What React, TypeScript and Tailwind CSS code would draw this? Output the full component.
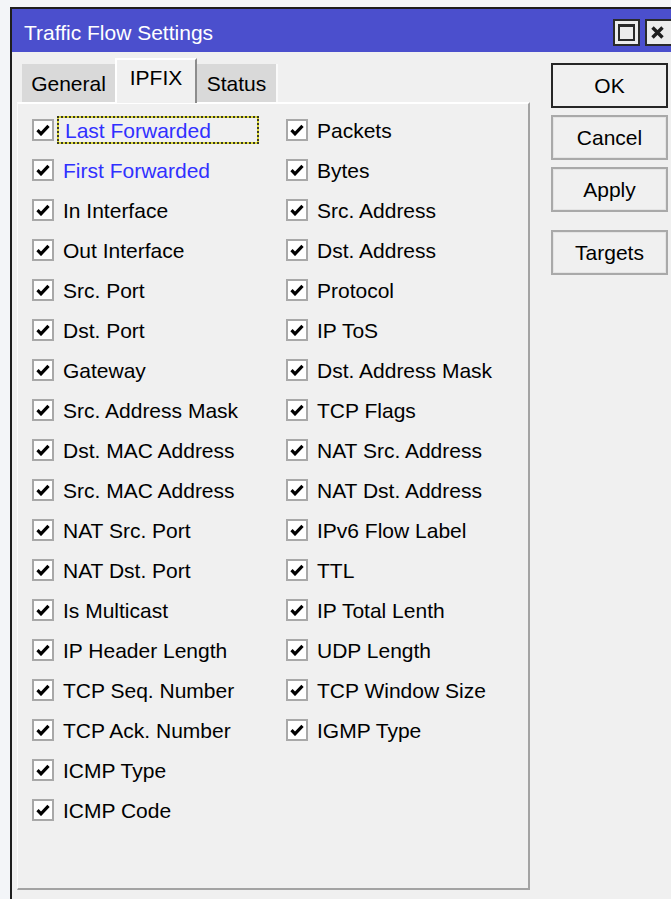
import React from "react";

const leftFields = [
  "Last Forwarded",
  "First Forwarded",
  "In Interface",
  "Out Interface",
  "Src. Port",
  "Dst. Port",
  "Gateway",
  "Src. Address Mask",
  "Dst. MAC Address",
  "Src. MAC Address",
  "NAT Src. Port",
  "NAT Dst. Port",
  "Is Multicast",
  "IP Header Length",
  "TCP Seq. Number",
  "TCP Ack. Number",
  "ICMP Type",
  "ICMP Code",
];

const rightFields = [
  "Packets",
  "Bytes",
  "Src. Address",
  "Dst. Address",
  "Protocol",
  "IP ToS",
  "Dst. Address Mask",
  "TCP Flags",
  "NAT Src. Address",
  "NAT Dst. Address",
  "IPv6 Flow Label",
  "TTL",
  "IP Total Lenth",
  "UDP Length",
  "TCP Window Size",
  "IGMP Type",
];

const blueFields = new Set(["Last Forwarded", "First Forwarded"]);

function Check() {
  return (
    <span className="flex h-[22px] w-[22px] shrink-0 items-center justify-center border-2 border-[#a8a8a8] bg-white">
      <svg width="14" height="12" viewBox="0 0 14 12">
        <path d="M1.5 6.2 L5 9.8 L12.5 1.8" fill="none" stroke="#000" strokeWidth="3.2" strokeLinejoin="miter" />
      </svg>
    </span>
  );
}

function Field({ label, focused }: { label: string; focused?: boolean }) {
  const blue = blueFields.has(label);
  return (
    <div className="flex h-[40px] items-center">
      <Check />
      {focused ? (
        <span className="relative ml-[3px] flex h-[28px] w-[202px] items-center border-2 border-[#e0dc3a] pl-[6px]">
          <span className="pointer-events-none absolute inset-[-2px] border-2 border-dotted border-[#3a3a20]" />
          <span className="text-[#3030ff]">{label}</span>
        </span>
      ) : (
        <span className={`ml-[3px] border-2 border-transparent px-[4px] ${blue ? "text-[#3030ff]" : "text-black"}`}>
          {label}
        </span>
      )}
    </div>
  );
}

function DialogButton({ label, primary }: { label: string; primary?: boolean }) {
  return (
    <button
      className={`flex h-[45px] w-[117px] items-center justify-center bg-[#f0f0f0] text-black ${
        primary ? "border-2 border-[#262626]" : "border-2 border-[#a9a9a9] shadow-[inset_0_0_0_1px_#e4e4e4]"
      }`}
    >
      {label}
    </button>
  );
}

export default function App() {
  return (
    <div
      className="h-[899px] w-[671px] overflow-hidden bg-[#f3f5f8] pl-[10px] pt-[7px] text-[21px] leading-none"
      style={{ fontFamily: "'Liberation Sans', Arial, sans-serif" }}
    >
      <div className="flex h-full flex-col overflow-hidden border-l-2 border-t-2 border-[#1e1e1e] bg-[#f0f0f0]">
        {/* title bar */}
        <div className="flex h-[43px] shrink-0 items-center bg-[#4b4fcd] pl-[12px] pt-[3px]">
          <span className="text-white">Traffic Flow Settings</span>
          <div className="ml-auto flex gap-[5px]">
            <span className="flex h-[27px] w-[27px] items-center justify-center border-2 border-[#2a2a2a] bg-[#ececec]">
              <span className="h-[17px] w-[17px] border-2 border-t-[3px] border-[#2a2a2a]" />
            </span>
            <span className="flex h-[27px] w-[26px] items-center justify-start border-y-2 border-l-2 border-[#2a2a2a] bg-[#ececec] pl-[3px]">
              <svg width="15" height="15" viewBox="0 0 15 15">
                <path d="M2.5 2.5 L12.5 12.5 M12.5 2.5 L2.5 12.5" stroke="#1e1e1e" strokeWidth="3.4" />
              </svg>
            </span>
          </div>
        </div>

        {/* body */}
        <div className="flex flex-1 pb-[9px] pl-[5px]">
          <div className="flex w-[513px] flex-col">
            {/* tabs */}
            <div className="flex h-[50px] shrink-0 items-end pl-[5px]">
              <div className="flex h-[38px] w-[93px] items-center justify-center bg-[#d9d9d9] text-black">
                General
              </div>
              <div className="relative top-[1px] z-10 flex h-[45px] w-[82px] items-start justify-center border-l-2 border-r-2 border-t-2 border-l-white border-r-[#8c8c8c] border-t-white bg-[#f0f0f0] pt-[7px] text-black">
                IPFIX
              </div>
              <div className="flex h-[38px] w-[81px] items-center justify-center border-r-2 border-[#fafafa] bg-[#d9d9d9] text-black">
                Status
              </div>
            </div>

            {/* tab page */}
            <div className="flex flex-1 border-b-2 border-l border-r-2 border-t-2 border-b-[#a3a3a3] border-l-[#fbfbfb] border-r-[#a3a3a3] border-t-white pl-[14px] pt-[6px]">
              <div className="flex w-[254px] flex-col">
                {leftFields.map((f, i) => (
                  <Field key={f} label={f} focused={i === 0} />
                ))}
              </div>
              <div className="flex flex-col">
                {rightFields.map((f) => (
                  <Field key={f} label={f} />
                ))}
              </div>
            </div>
          </div>

          {/* dialog buttons */}
          <div className="ml-[21px] flex flex-col pt-[11px]">
            <DialogButton label="OK" primary />
            <div className="h-[7px]" />
            <DialogButton label="Cancel" />
            <div className="h-[7px]" />
            <DialogButton label="Apply" />
            <div className="h-[18px]" />
            <DialogButton label="Targets" />
          </div>
        </div>
      </div>
    </div>
  );
}
